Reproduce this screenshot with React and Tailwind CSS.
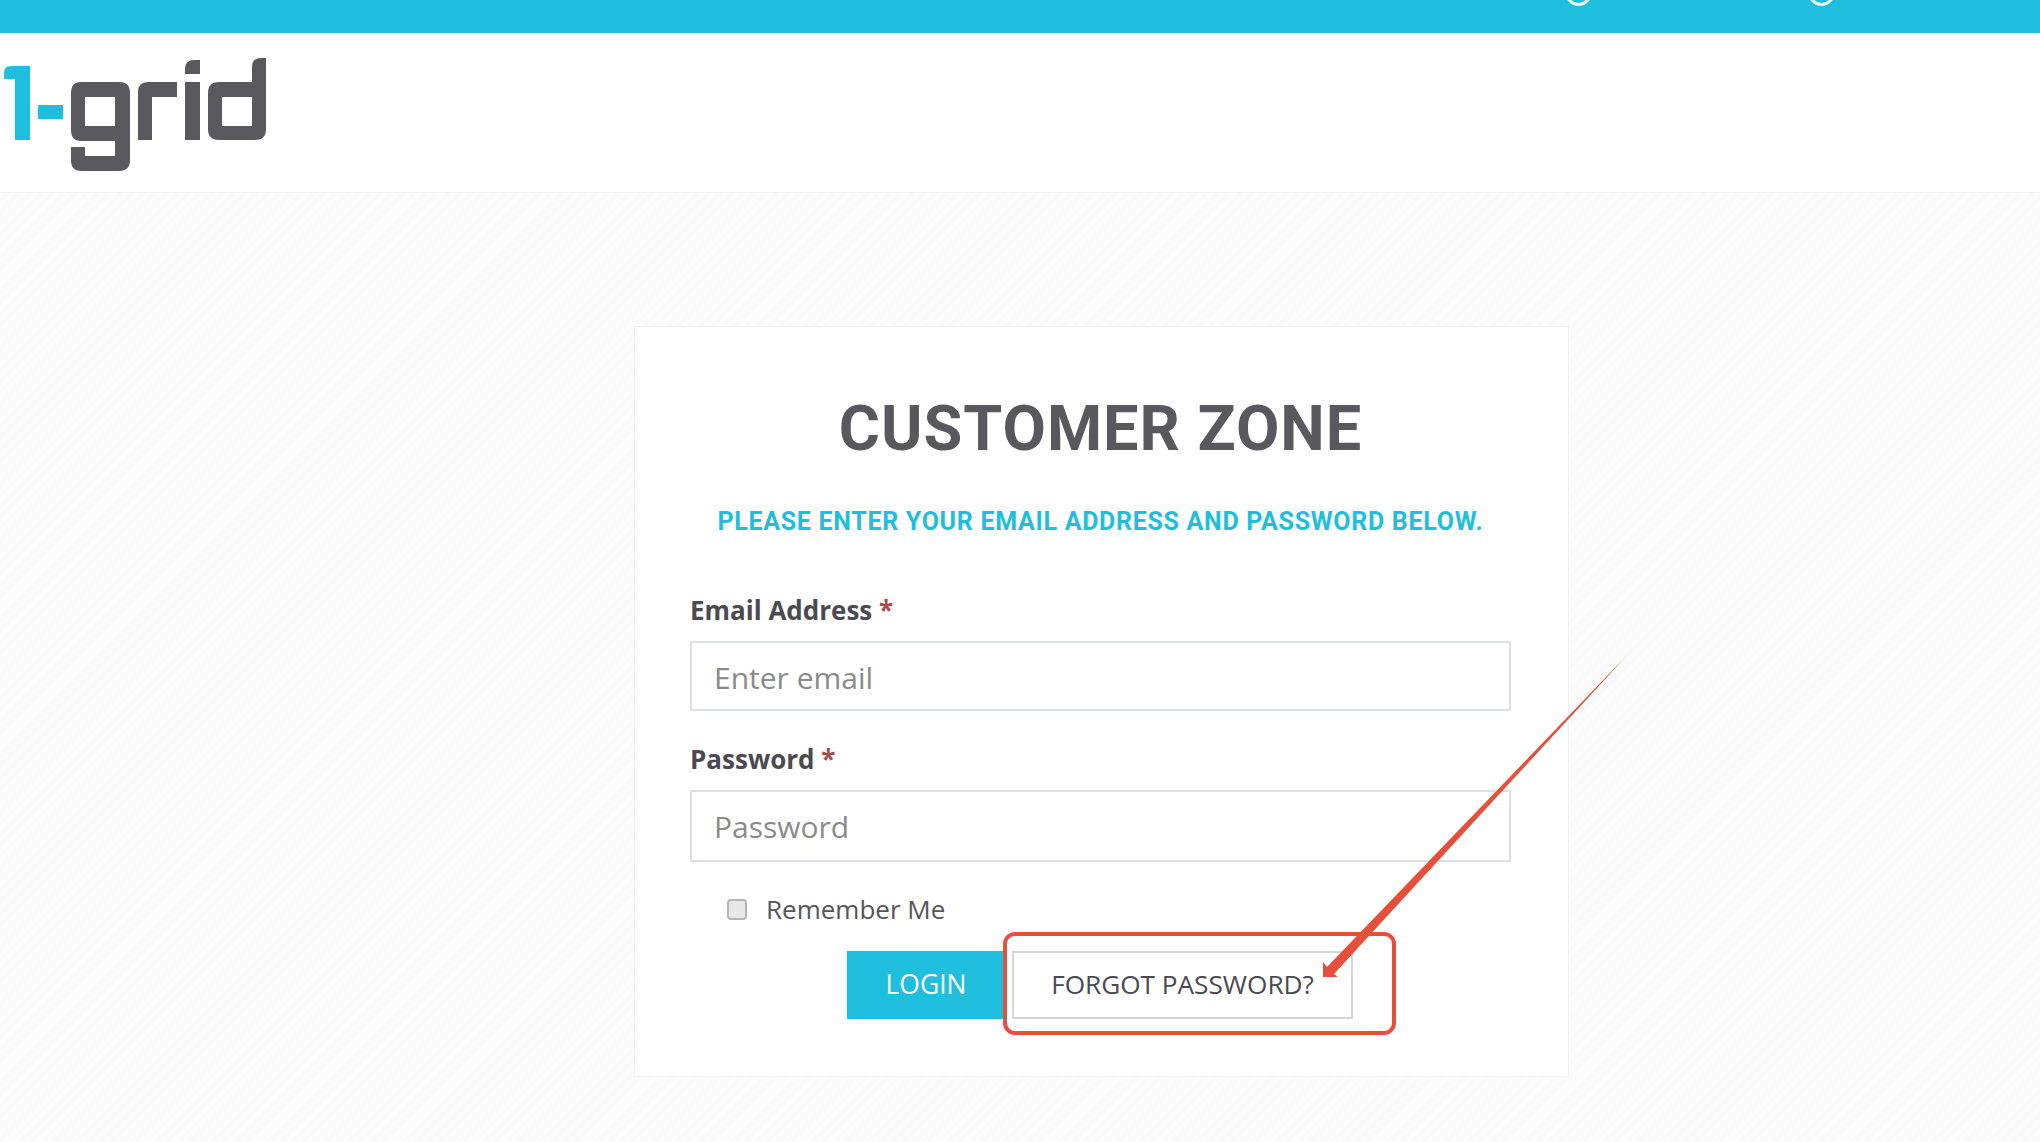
export default function App() {
  return (
    <div className="relative h-[1142px] w-[2040px] overflow-hidden bg-[#fbfbfb] bg-[repeating-linear-gradient(135deg,#fcfcfc_0px,#fcfcfc_4px,#fafafa_4px,#fafafa_8px)] font-['Open_Sans',sans-serif]">
      <div className="flex h-[33px] justify-end overflow-hidden bg-[#20bedd] pr-[205px]">
        <div className="flex gap-[216px]">
          <div className="-mt-[21px] h-[27px] w-[27px] rounded-full border-[3px] border-[#e6f8fb]"></div>
          <div className="-mt-[21px] h-[27px] w-[27px] rounded-full border-[3px] border-[#e6f8fb]"></div>
        </div>
      </div>
      <header className="h-[160px] border-b border-[#f0f0f0] bg-white">
        <svg width="280" height="159" viewBox="0 33 280 159" className="block">
          <path d="M11 66H30V140H15V79H4V73Q4 66 11 66Z" fill="#20bedd" />
          <rect x="38" y="105" width="25" height="14" fill="#20bedd" />
          <path fillRule="evenodd" fill="#5a595e" d="M81 82H119Q130 82 130 93V160Q130 171 119 171H81Q71 171 71 160V147H85V156H115V141H81Q71 141 71 130V93Q71 82 81 82ZM85 97V126H115V97Z" />
          <path fill="#5a595e" d="M148 82H177V97H152V140H138V92Q138 82 148 82Z" />
          <path fill="#5a595e" d="M194 60H200V74H185V69Q185 60 194 60ZM185 82H200V140H185Z" />
          <path fillRule="evenodd" fill="#5a595e" d="M261 58H266V129Q266 140 255 140H219Q208 140 208 129V93Q208 82 219 82H252V67Q252 58 261 58ZM222 97V126H252V97Z" />
        </svg>
      </header>
      <main className="pl-[634px] pt-[133px]">
        <section className="h-[751px] w-[935px] border border-[#f0f0f0] bg-white pl-[55px] pr-[57px]">
          <h1 className="mt-[69px] text-center font-['Roboto',sans-serif] text-[63px] font-bold leading-[66px] tracking-[1px] text-[#58585d]">CUSTOMER ZONE</h1>
          <p className="mt-[45px] text-center font-['Roboto',sans-serif] text-[25px] font-bold leading-[30px] tracking-[0.7px] text-[#20bedd]">PLEASE ENTER YOUR EMAIL ADDRESS AND PASSWORD BELOW.</p>
          <label className="mt-[55px] block text-[26px] font-bold leading-[36px] text-[#4a4a50]">Email Address <span className="text-[#a8494b]">*</span></label>
          <div className="mt-[13px] flex h-[70px] items-center border-2 border-[#dcdfe6] px-[22px] pt-[2px] text-[30px] text-[#8a8a8a]">Enter email</div>
          <label className="mt-[30px] block text-[26px] font-bold leading-[36px] text-[#4a4a50]">Password <span className="text-[#a8494b]">*</span></label>
          <div className="mt-[13px] flex h-[72px] items-center border-2 border-[#dcdfe6] px-[22px] pt-[1px] text-[30px] text-[#8a8a8a]">Password</div>
          <div className="mt-[29px] flex h-[36px] items-center pl-[37px]">
            <span className="h-[21px] w-[20px] rounded-[4px] border-2 border-[#b5b5b5] bg-[#e8e8e8]"></span>
            <span className="ml-[19px] text-[26px] text-[#55555a]">Remember Me</span>
          </div>
          <div className="relative mt-[24px] flex justify-center gap-[7px] pr-[1px]">
            <button className="h-[68px] w-[158px] bg-[#20bedd] text-[26.5px] text-white">LOGIN</button>
            <button className="h-[68px] w-[341px] border-2 border-[#d5d5d5] bg-white text-[26.2px] text-[#4a4a50]">FORGOT PASSWORD?</button>
            <div className="absolute left-[313px] top-[-19px] h-[103px] w-[393px] rounded-[12px] border-4 border-[#e6503a]"></div>
          </div>
        </section>
      </main>
      <svg width="2040" height="1142" className="pointer-events-none absolute left-0 top-0">
        <defs>
          <linearGradient id="fade" gradientUnits="userSpaceOnUse" x1="1633" y1="649" x2="1323" y2="977">
            <stop offset="0" stopColor="#e6503a" stopOpacity="0" />
            <stop offset="0.08" stopColor="#e6503a" />
          </linearGradient>
        </defs>
        <polygon fill="url(#fade)" points="1633,649 1334,974 1338,977 1323,977 1323,962 1327,967" />
      </svg>
    </div>
  );
}
